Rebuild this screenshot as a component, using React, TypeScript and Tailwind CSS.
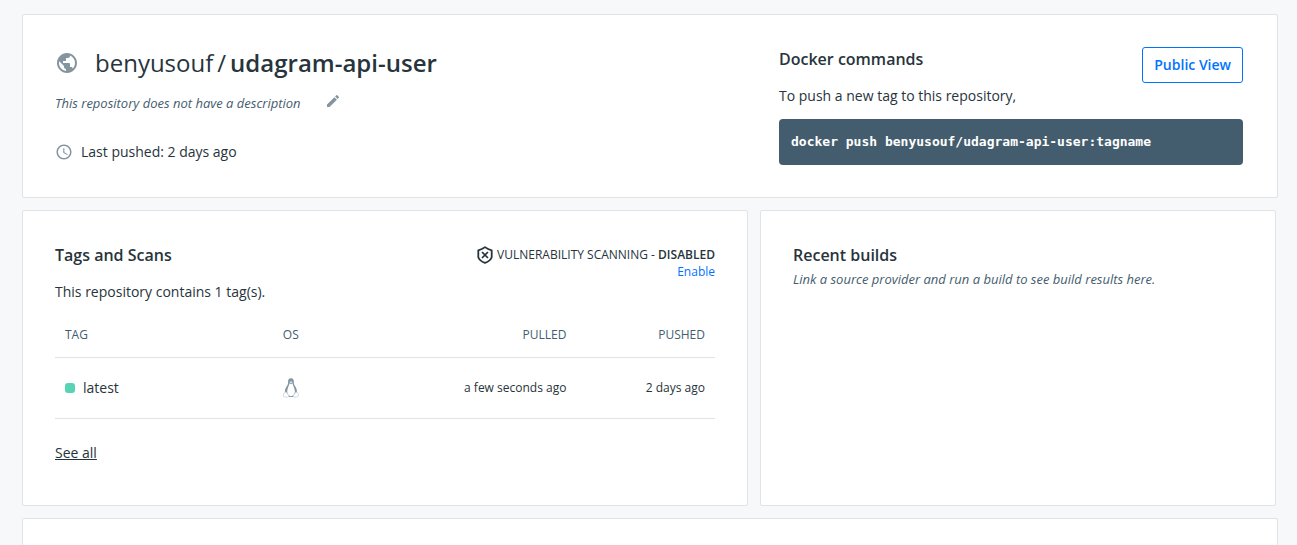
import { MdAccessTime, MdEdit, MdPublic } from "react-icons/md";

const card = "rounded-[2px] border border-[#e0e4e7] bg-white";
const heading = "text-base leading-6 font-semibold";

function ShieldIcon() {
  return (
    <svg className="h-[18px] w-4 shrink-0" viewBox="0 0 16 18" fill="none" stroke="#27343b" aria-hidden="true">
      <path d="M8 1.100C6 2.600 3.800 3.600 1.300 4.300v6.900C2.200 13.700 4.500 15.600 8 16.900c3.500-1.300 5.800-3.200 6.700-5.700V4.300C12.200 3.600 10 2.600 8 1.100Z" strokeWidth="1.800" strokeLinejoin="round" />
      <path d="m5 6 6 6m0-6-6 6" strokeWidth="1.700" />
    </svg>
  );
}

function PenguinIcon() {
  return (
    <svg className="h-5 w-4" viewBox="0 0 16 20" role="img" aria-label="Linux">
      <path d="M8 .2C5.800 .2 5 1.600 5.100 3.400c.1 2.300-.3 3.200-1.500 5.200-1.100 1.700-1.900 3.700-1.800 6.200L6 19h4.500l3.600-4.200c.1-2.500-.8-4.500-1.800-6.200-1.100-1.900-1.500-3-1.500-5.200C10.800 1.600 10.200 .2 8 .2Z" fill="#8495a0" />
      <path d="M6.500 5.300c-.2 2.300-2.300 5-2.300 8.200 0 2.600 1.500 4.700 3.800 4.700s3.900-2.100 3.900-4.700c0-3.200-2.200-5.900-2.400-8.200L8 6.300Z" fill="#fff" />
      <path d="M6.400 3.900 8 3.300l1.700.6L8 5.400Z" fill="#dce2e6" />
      <path d="M2.800 13.700 5.500 17c.6.9.2 2.300-1 2.300-1.400 0-2.700-.6-4.100-.9.300-1 0-1.900.1-2.800.8-.4 1.600-.8 2.300-1.900Zm10.500 0-2.700 3.300c-.6.9-.2 2.300 1 2.300 1.300 0 2.300-.7 4-1.400-.4-.7-.1-1.600-.3-2.400-.8-.3-1.500-.8-2-1.800Z" fill="#fff" stroke="#c3ccd2" strokeWidth=".7" />
    </svg>
  );
}

function RepositorySummary() {
  return (
    <section className={`${card} flex justify-between pt-8 pr-[34px] pb-8 pl-8`}>
      <div>
        <h1 className="flex items-center text-2xl leading-8">
          <MdPublic className="mr-4 size-6 text-[#8495a0]" />
          <span>benyusouf</span>
          <span className="mx-1">/</span>
          <span className="font-semibold">udagram-api-user</span>
        </h1>
        <div className="mt-3 flex items-start text-[13px] leading-6">
          <em className="text-[#445d6e]">This repository does not have a description</em>
          <button type="button" aria-label="Edit description" className="ml-6 pt-[2px] text-[#8495a0]">
            <MdEdit className="size-4" />
          </button>
        </div>
        <p className="mt-[25px] flex items-center gap-2 text-sm leading-6">
          <MdAccessTime className="size-[18px] text-[#8495a0]" />
          Last pushed: 2 days ago
        </p>
      </div>
      <div className="w-116">
        <div className="flex items-start justify-between">
          <h2 className={heading}>Docker commands</h2>
          <button type="button" className="h-9 rounded-[3px] border border-[#0073ff] px-[11px] text-sm font-semibold text-[#0073ff]">
            Public View
          </button>
        </div>
        <p className="mt-px text-sm leading-6">To push a new tag to this repository,</p>
        <pre className="mt-[11px] rounded-[4px] bg-[#445d6e] px-3 py-3 text-[13px] leading-[22px] font-bold text-white font-['DejaVu_Sans_Mono',monospace]">
          docker push benyusouf/udagram-api-user:tagname
        </pre>
      </div>
    </section>
  );
}

function TagsCard() {
  return (
    <section className={`${card} px-8 pt-8 pb-10`}>
      <div className="flex items-start justify-between">
        <h2 className={heading}>Tags and Scans</h2>
        <div className="pt-[3px] text-right text-xs leading-4">
          <p className="flex items-center gap-1">
            <ShieldIcon />
            <span>
              VULNERABILITY SCANNING - <span className="font-semibold">DISABLED</span>
            </span>
          </p>
          <a href="#enable" className="text-[#0073ff]">Enable</a>
        </div>
      </div>
      <p className="text-sm leading-6">This repository contains 1 tag(s).</p>
      <table className="mt-[9px] w-full table-fixed">
        <colgroup>
          <col className="w-[33%]" />
          <col className="w-[22%]" />
          <col />
          <col className="w-[21%]" />
        </colgroup>
        <thead>
          <tr className="h-11 border-b border-[#e0e4e7] text-left text-xs text-[#445d6e]">
            <th scope="col" className="px-[10px] font-normal">TAG</th>
            <th scope="col" className="px-[10px] font-normal">OS</th>
            <th scope="col" className="px-[10px] text-right font-normal">PULLED</th>
            <th scope="col" className="px-[10px] text-right font-normal">PUSHED</th>
          </tr>
        </thead>
        <tbody>
          <tr className="h-[61px] border-b border-[#e0e4e7] text-xs">
            <td className="px-[10px] text-sm">
              <div className="flex items-center gap-2">
                <span className="size-[10px] rounded-[3px] bg-[#58d3b3]" />
                latest
              </div>
            </td>
            <td className="px-[10px]"><PenguinIcon /></td>
            <td className="px-[10px] text-right">a few seconds ago</td>
            <td className="px-[10px] text-right">2 days ago</td>
          </tr>
        </tbody>
      </table>
      <a href="#tags" className="mt-[22px] inline-block text-sm leading-6 underline">See all</a>
    </section>
  );
}

export default function App() {
  return (
    <main className="flex min-h-screen flex-col gap-3 bg-[#f7f8fa] pt-[14px] pr-[19px] pl-[22px] text-[#27343b] font-['Open_Sans',sans-serif]">
      <RepositorySummary />
      <div className="mr-[2px] grid grid-cols-[726fr_516fr] gap-3">
        <TagsCard />
        <section className={`${card} p-8`}>
          <h2 className={heading}>Recent builds</h2>
          <p className="text-[13px] leading-6 text-[#445d6e] italic">
            Link a source provider and run a build to see build results here.
          </p>
        </section>
      </div>
      <section className={`${card} grow border-b-0`} aria-label="Readme" />
    </main>
  );
}
